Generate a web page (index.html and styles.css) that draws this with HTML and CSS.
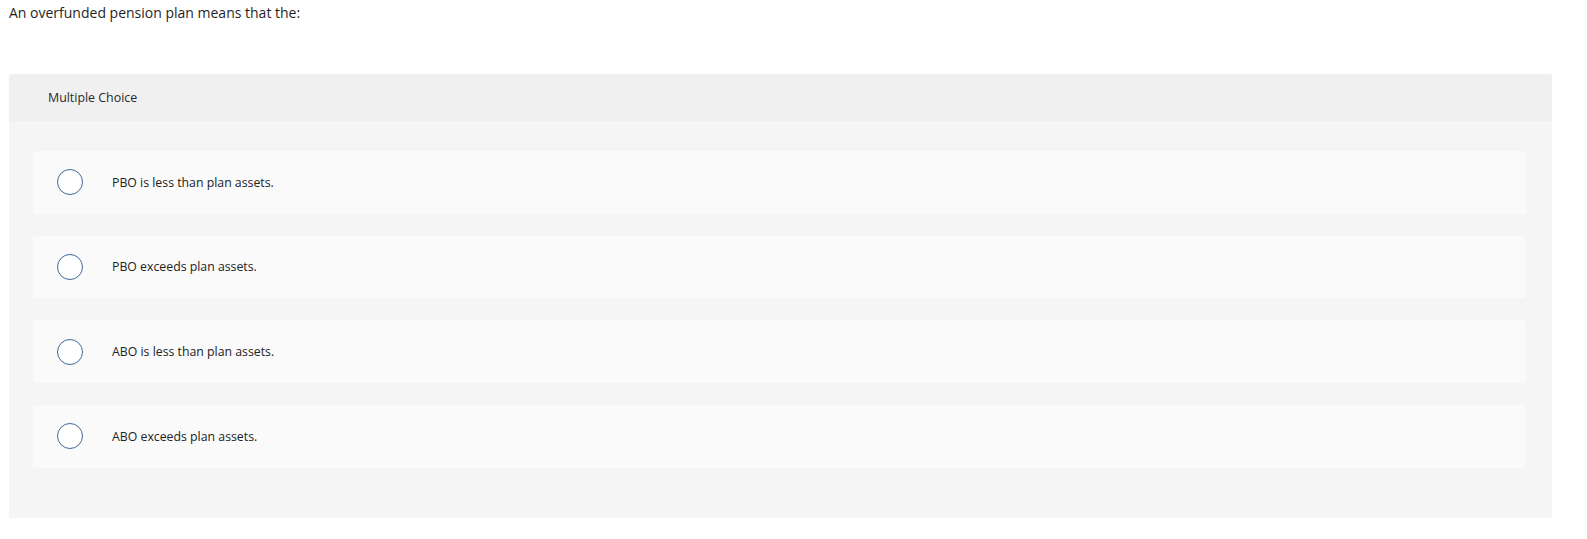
FILE: index.html
```html
<!DOCTYPE html>
<html>
<head>
<meta charset="utf-8">
<link rel="stylesheet" href="styles.css">
</head>
<body>
<div class="page">
  <p class="prompt">An overfunded pension plan means that the:</p>
  <div class="question">
    <div class="q-header">Multiple Choice</div>
    <div class="choices">
      <div class="choice"><span class="radio"></span><span class="label">PBO is less than plan assets.</span></div>
      <div class="choice"><span class="radio"></span><span class="label">PBO exceeds plan assets.</span></div>
      <div class="choice"><span class="radio"></span><span class="label">ABO is less than plan assets.</span></div>
      <div class="choice"><span class="radio"></span><span class="label">ABO exceeds plan assets.</span></div>
    </div>
  </div>
</div>
</body>
</html>
```
FILE: styles.css
```css
html, body {
  margin: 0;
  padding: 0;
  background: #ffffff;
}
body {
  font-family: "Open Sans", "Liberation Sans", Arial, sans-serif;
  color: #222222;
}
.page {
  padding: 0 9px;
}
.prompt {
  margin: 0;
  padding-top: 3px;
  height: 74px;
  box-sizing: border-box;
  font-size: 14px;
  line-height: 20px;
  color: #1f1f1f;
}
.question {
  width: 1543px;
  background: #f5f5f5;
  border-radius: 3px;
  overflow: hidden;
}
.q-header {
  height: 47px;
  background: #f0f0f0;
  display: flex;
  align-items: center;
  padding-left: 39px;
  font-size: 12.4px;
  color: #2a2a2a;
}
.choices {
  padding: 30px 26px 50px 24px;
  display: flex;
  flex-direction: column;
  gap: 22px;
}
.choice {
  height: 62.67px;
  background: #fafafa;
  border-radius: 3px;
  display: flex;
  align-items: center;
  padding-left: 24px;
}
.radio {
  width: 26px;
  height: 26px;
  box-sizing: border-box;
  border: 1.5px solid #3d6a98;
  border-radius: 50%;
  background: #ffffff;
  flex: none;
}
.label {
  margin-left: 29px;
  font-size: 12.3px;
  color: #222222;
}
```
